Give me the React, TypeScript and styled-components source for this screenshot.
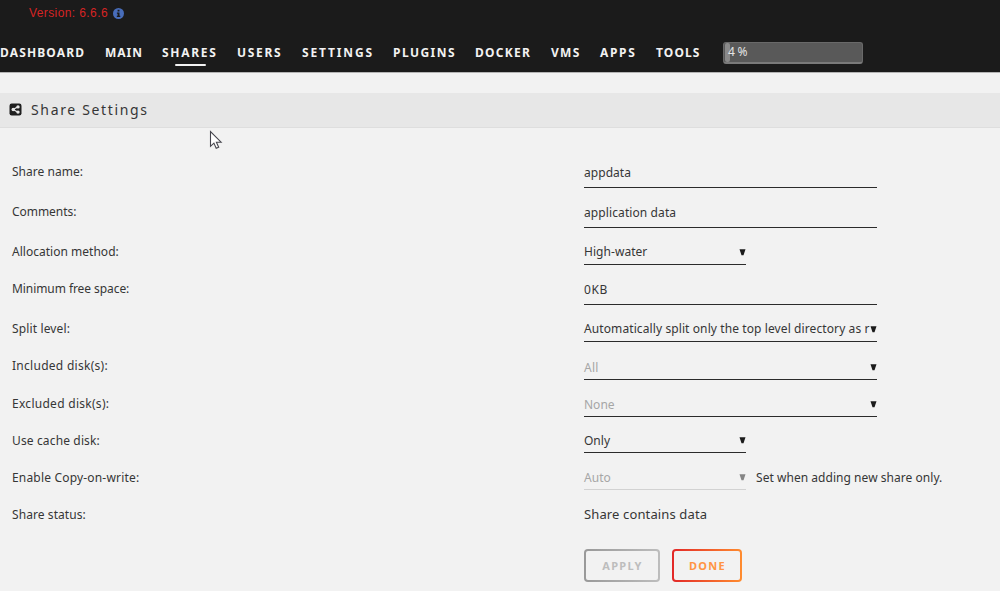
import React from "react";
import styled, { createGlobalStyle } from "styled-components";

const Global = createGlobalStyle`
  * { box-sizing: border-box; }
  html, body { margin: 0; padding: 0; }
  body {
    background: #f2f2f2;
    color: #363636;
    font: 12px/20px "Noto Sans", "Open Sans", sans-serif;
    overflow: hidden;
  }
`;

const Page = styled.div`
  width: 1000px;
  height: 591px;
  overflow: hidden;
`;

const Header = styled.header`
  height: 73px;
  background: #1b1b1b;
  border-bottom: 1px solid #b4b4b4;
  display: flex;
  flex-direction: column;
`;

const Version = styled.div`
  display: flex;
  align-items: center;
  gap: 5px;
  height: 20px;
  margin: 3px 0 0 29px;
  color: #d62424;
  font: 12px/20px "Liberation Sans", Arial, sans-serif;
  letter-spacing: 0.4px;
`;

const Nav = styled.nav`
  display: flex;
  height: 40px;
  margin-top: 10px;
`;

const NavItem = styled.a<{ $width: number; $track: number }>`
  flex: 0 0 ${(p) => p.$width}px;
  display: flex;
  flex-direction: column;
  white-space: nowrap;
  color: #f2f2f2;
  font-weight: 700;
  letter-spacing: ${(p) => p.$track}px;
  line-height: 40px;
`;

const ActiveBar = styled.span`
  width: 31px;
  height: 2px;
  margin: -9px 0 0 13px;
  background: #f2f2f2;
  border-radius: 1px;
`;

const Meter = styled.div`
  width: 140px;
  height: 22px;
  margin-top: 9px;
  padding: 0 1px;
  display: flex;
  background: #595959;
  border: 1px solid #696969;
  border-bottom: 2px solid #7a7a7a;
  border-radius: 3px;
`;

const MeterFill = styled.span`
  width: 5px;
  height: 19px;
  margin-right: -2px;
  background: #8a8a8a;
  border-radius: 2px;
`;

const MeterText = styled.span`
  color: #e4e4e4;
  line-height: 17px;
  letter-spacing: 2.6px;
`;

const TitleBar = styled.div`
  display: flex;
  align-items: center;
  gap: 9px;
  height: 35px;
  margin-top: 20px;
  padding: 0 0 1px 9px;
  background: #e7e7e7;
  border-bottom: 1px solid #dedede;
`;

const Title = styled.h1`
  margin: 0;
  font-size: 14px;
  font-weight: 400;
  letter-spacing: 1.65px;
`;

const Form = styled.div`
  margin-top: 34px;
  padding-left: 12px;
`;

const Row = styled.div<{ $height: number }>`
  display: grid;
  grid-template-columns: 572px 1fr;
  align-items: start;
  height: ${(p) => p.$height}px;
`;

const Label = styled.span<{ $track: number; $top?: number }>`
  padding-top: ${(p) => p.$top ?? 0}px;
  letter-spacing: ${(p) => p.$track}px;
  white-space: nowrap;
`;

const Cell = styled.div`
  display: flex;
`;

const Field = styled.div<{ $wide?: boolean; $height: number; $top: number; $muted?: boolean; $disabled?: boolean }>`
  display: flex;
  justify-content: space-between;
  width: ${(p) => (p.$wide ? 293 : 162)}px;
  height: ${(p) => p.$height}px;
  border-bottom: 1px solid ${(p) => (p.$disabled ? "#d2d2d2" : "#2b2b2b")};
  color: ${(p) => (p.$muted ? "#a6a6a6" : "#363636")};
`;

const Value = styled.span<{ $track: number; $top: number }>`
  padding-top: ${(p) => p.$top}px;
  white-space: nowrap;
  letter-spacing: ${(p) => p.$track}px;
`;

const ArrowIcon = styled.svg<{ $top: number }>`
  flex: none;
  width: 7px;
  height: 7px;
  margin-top: ${(p) => p.$top}px;
`;

const Note = styled.span`
  margin-left: 10px;
  padding-top: 1px;
  letter-spacing: 0.04px;
`;

const Status = styled.span`
  font-size: 13px;
  letter-spacing: 0.13px;
`;

const Actions = styled.div`
  display: flex;
  gap: 12px;
  margin: 8px 0 0 572px;
`;

const Button = styled.button<{ $width: number; $from: string; $to: string; $text: string }>`
  width: ${(p) => p.$width}px;
  height: 33px;
  padding: 0 0 0 1px;
  border: 2px solid transparent;
  border-radius: 4px;
  background:
    linear-gradient(#f2f2f2, #f2f2f2) padding-box,
    linear-gradient(90deg, ${(p) => p.$from}, ${(p) => p.$to}) border-box;
  color: ${(p) => p.$text};
  font: 700 11px/20px "Noto Sans", sans-serif;
  letter-spacing: 1.3px;
`;

const tabs = [
  { name: "DASHBOARD", width: 105, track: 1.15 },
  { name: "MAIN", width: 57, track: 1.0 },
  { name: "SHARES", width: 75, track: 1.7 },
  { name: "USERS", width: 65, track: 1.7 },
  { name: "SETTINGS", width: 91, track: 1.85 },
  { name: "PLUGINS", width: 82, track: 1.45 },
  { name: "DOCKER", width: 76, track: 1.25 },
  { name: "VMS", width: 49, track: 1.3 },
  { name: "APPS", width: 56, track: 1.65 },
  { name: "TOOLS", width: 67, track: 1.1 },
];

type RowData = {
  label: string;
  track: number;
  height: number;
  value: string;
  valueTrack: number;
  field: number;
  top: number;
  labelTop?: number;
  arrowTop?: number;
  wide?: boolean;
  muted?: boolean;
  disabled?: boolean;
  note?: string;
};

const rows: RowData[] = [
  { label: "Share name:", track: 0.02, height: 40, value: "appdata", valueTrack: 0.05, field: 26, top: 1, wide: true },
  { label: "Comments:", track: -0.04, height: 40, value: "application data", valueTrack: 0.1, field: 26, top: 1, wide: true },
  { label: "Allocation method:", track: 0.02, height: 37, value: "High-water", valueTrack: 0.05, field: 23, top: 0, arrowTop: 7 },
  { label: "Minimum free space:", track: -0.07, height: 40, value: "0KB", valueTrack: 0.6, field: 26, top: 1, wide: true },
  { label: "Split level:", track: 0.14, height: 37, value: "Automatically split only the top level directory as r", valueTrack: 0.1, field: 23, top: 0, arrowTop: 7, wide: true },
  { label: "Included disk(s):", track: 0.28, height: 37, value: "All", valueTrack: 0.3, field: 24, top: 2, arrowTop: 8, wide: true, muted: true },
  { label: "Excluded disk(s):", track: 0.28, height: 37, value: "None", valueTrack: 0, field: 24, top: 2, labelTop: 1, arrowTop: 8, wide: true, muted: true },
  { label: "Use cache disk:", track: 0.14, height: 37, value: "Only", valueTrack: 0, field: 23, top: 1, labelTop: 1, arrowTop: 7 },
  { label: "Enable Copy-on-write:", track: 0.18, height: 37, value: "Auto", valueTrack: 0.05, field: 23, top: 1, labelTop: 1, arrowTop: 7, muted: true, disabled: true, note: "Set when adding new share only." },
];

const InfoIcon = () => (
  <svg width="11" height="11" viewBox="0 0 11 11">
    <circle cx="5.5" cy="5.5" r="5.5" fill="#486dba" />
    <path d="M4.6 1.8h1.9v1.6H4.6zM3.9 4.5h2.6v3.2h.8V9H3.8V7.7h.8V5.7h-.7z" fill="#1b1b1b" />
  </svg>
);

const ShareIcon = () => (
  <svg width="13" height="13" viewBox="0 0 13 13">
    <rect x="0.5" y="0.5" width="12" height="12" rx="2.2" fill="#1f1f1f" />
    <path d="M9 3.8 4.2 6.5 9 9.2" stroke="#e7e7e7" strokeWidth="1.3" fill="none" />
    <circle cx="9" cy="3.9" r="1.7" fill="#e7e7e7" />
    <circle cx="4.2" cy="6.5" r="1.7" fill="#e7e7e7" />
    <circle cx="9" cy="9.1" r="1.7" fill="#e7e7e7" />
  </svg>
);

const Pointer = styled.svg`
  position: absolute;
  left: 209px;
  top: 130px;
`;

export default function App() {
  return (
    <Page>
      <Global />
      <Header>
        <Version>
          Version: 6.6.6
          <InfoIcon />
        </Version>
        <Nav>
          {tabs.map((t) => (
            <NavItem key={t.name} $width={t.width} $track={t.track}>
              {t.name}
              {t.name === "SHARES" && <ActiveBar />}
            </NavItem>
          ))}
          <Meter>
            <MeterFill />
            <MeterText>4%</MeterText>
          </Meter>
        </Nav>
      </Header>
      <TitleBar>
        <ShareIcon />
        <Title>Share Settings</Title>
      </TitleBar>
      <Form>
        {rows.map((r) => (
          <Row key={r.label} $height={r.height}>
            <Label $track={r.track} $top={r.labelTop}>{r.label}</Label>
            <Cell>
              <Field $wide={r.wide} $height={r.field} $top={r.top} $muted={r.muted} $disabled={r.disabled}>
                <Value $track={r.valueTrack} $top={r.top}>{r.value}</Value>
                {r.arrowTop !== undefined && (
                  <ArrowIcon $top={r.arrowTop} viewBox="0 0 7 7">
                    <path d="M0.5 0.3h6L4.5 6.3H2.5z" fill={r.disabled ? "#858585" : "#1b1b1b"} />
                  </ArrowIcon>
                )}
              </Field>
              {r.note && <Note>{r.note}</Note>}
            </Cell>
          </Row>
        ))}
        <Row $height={37}>
          <Label $track={0.08} $top={1}>Share status:</Label>
          <Status>Share contains data</Status>
        </Row>
        <Actions>
          <Button $width={76} $from="#999999" $to="#bdbdbd" $text="#bdbdbd">APPLY</Button>
          <Button $width={70} $from="#e22828" $to="#ff8c2f" $text="#ff9443">DONE</Button>
        </Actions>
      </Form>
      <Pointer width="14" height="20" viewBox="0 0 14 20">
        <path d="M1.5 1.5v14.8l3.4-3.2 2.3 5.2 2.5-1.1-2.3-5h4.7z" fill="#fff" stroke="#45454d" strokeWidth="1.1" />
      </Pointer>
    </Page>
  );
}
